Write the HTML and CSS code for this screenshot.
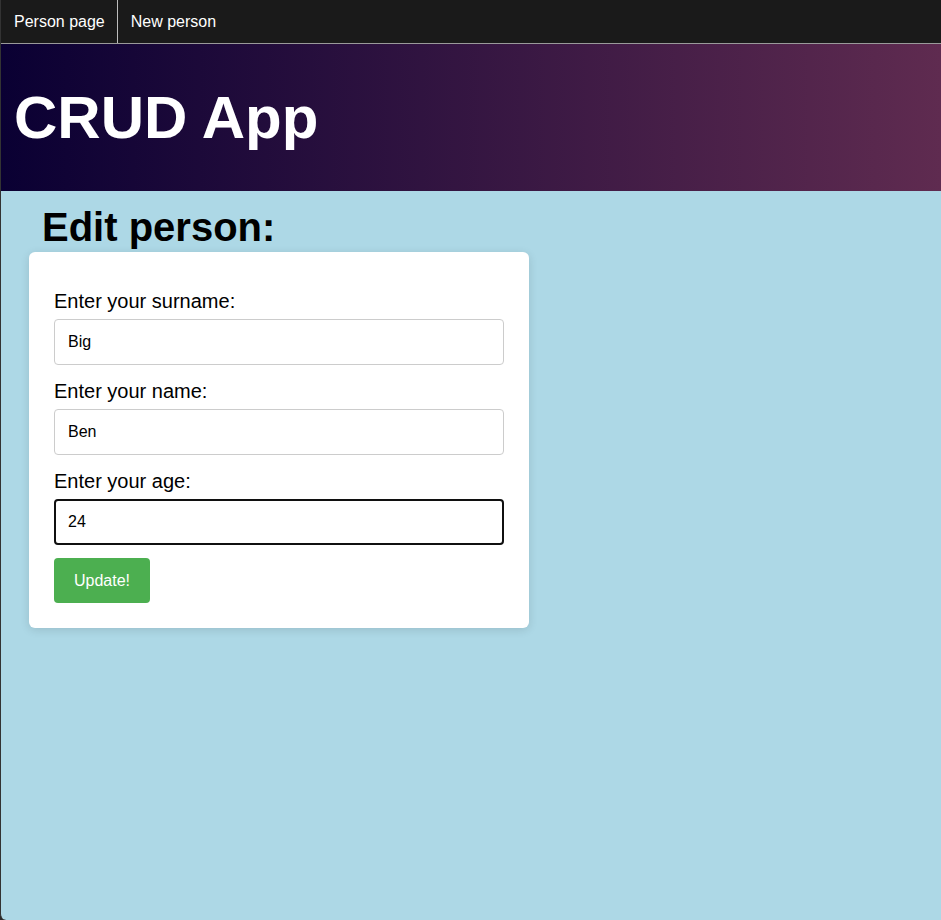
FILE: index.html
```html
<!DOCTYPE html>
<html lang="en">
<head>
<meta charset="utf-8">
<title>CRUD App</title>
<link rel="stylesheet" href="styles.css">
</head>
<body>
<div class="frame">
  <nav class="topnav">
    <a class="navlink sep" href="#">Person page</a>
    <a class="navlink" href="#">New person</a>
  </nav>
  <header class="hero">
    <h1 class="title">CRUD App</h1>
  </header>
  <main class="content">
    <h2 class="heading">Edit person:</h2>
    <form class="card">
      <label class="lbl" for="surname">Enter your surname:</label>
      <input class="field" id="surname" type="text" value="Big">
      <label class="lbl" for="name">Enter your name:</label>
      <input class="field" id="name" type="text" value="Ben">
      <label class="lbl" for="age">Enter your age:</label>
      <input class="field focused" id="age" type="text" value="24">
      <button class="btn" type="button">Update!</button>
    </form>
  </main>
</div>
</body>
</html>
```

FILE: styles.css
```css
html, body {
  margin: 0;
  padding: 0;
  height: 100%;
}
body {
  font-family: "Liberation Sans", Arial, sans-serif;
  background: #2b2b2b;
}
.frame {
  height: 100%;
  display: flex;
  flex-direction: column;
  background: #add8e6;
  border-left: 1px solid #333;
  border-bottom-left-radius: 6px;
  overflow: hidden;
  box-sizing: border-box;
}
.topnav {
  display: flex;
  height: 43px;
  background: #1a1a1a;
  border-bottom: 1px solid #9a9a9a;
}
.navlink {
  display: flex;
  align-items: center;
  padding: 0 12px 0 13px;
  color: #ffffff;
  text-decoration: none;
  font-size: 16px;
}
.sep {
  border-right: 1px solid #bdbdbd;
}
.hero {
  height: 147px;
  background: linear-gradient(to right, #0a0033, #5f2b50);
  display: flex;
  align-items: center;
}
.title {
  margin: 0 0 0 13px;
  color: #ffffff;
  font-size: 60px;
  font-weight: bold;
  line-height: 1;
}
.content {
  flex: 1;
  padding: 0 0 0 28px;
}
.heading {
  margin: 13px 0 2px 13px;
  font-size: 40px;
  font-weight: bold;
  color: #000;
  line-height: 46px;
}
.card {
  width: 500px;
  box-sizing: border-box;
  background: #ffffff;
  border-radius: 6px;
  box-shadow: 0 2px 10px rgba(0, 0, 0, 0.12);
  padding: 38px 25px 25px 25px;
  display: flex;
  flex-direction: column;
  align-items: flex-start;
}
.lbl {
  font-size: 20px;
  line-height: 23px;
  color: #000;
  margin-bottom: 6px;
}
.field {
  width: 450px;
  height: 46px;
  box-sizing: border-box;
  border: 1px solid #cccccc;
  border-radius: 4px;
  padding: 0 13px;
  font-family: "Liberation Sans", Arial, sans-serif;
  font-size: 16px;
  color: #000;
  margin: 0 0 15px 0;
  outline: none;
}
.focused {
  border: 2px solid #101010;
  padding: 0 12px;
  margin-bottom: 13px;
}
.btn {
  width: 96px;
  height: 45px;
  background: #4caf50;
  color: #ffffff;
  border: none;
  border-radius: 4px;
  font-family: "Liberation Sans", Arial, sans-serif;
  font-size: 16px;
  cursor: pointer;
}
```
